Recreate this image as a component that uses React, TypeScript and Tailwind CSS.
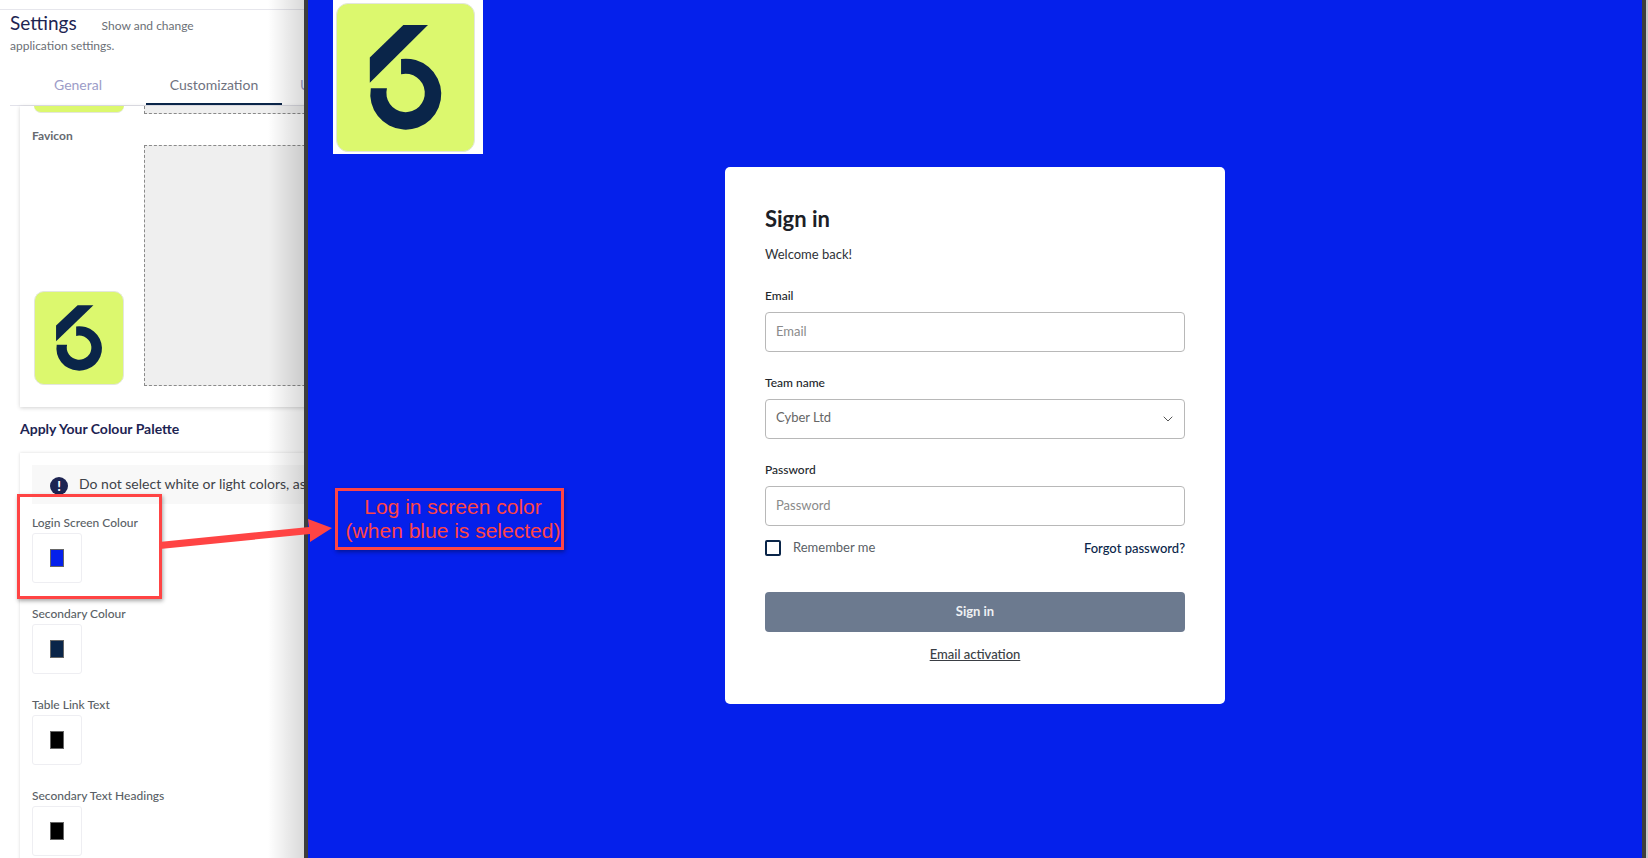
import { ChevronDown } from "lucide-react";

function Logo({ className }: { className: string }) {
  return (
    <div className={`border border-[#e3e6dc] bg-[#dcf86e] ${className}`}>
      <svg viewBox="0 0 139 149" preserveAspectRatio="none" className="h-full w-full">
        <path d="M67.3 21.3H92.3L33.3 79.7V54.3Z" fill="#0a2549" />
        <path
          d="M65 55.7A36 36 0 1 1 34.3 85.3H50.7A19.5 19.5 0 1 0 65 71.2Z"
          fill="#0a2549"
        />
      </svg>
    </div>
  );
}

const colours = [
  { label: "Login Screen Colour", value: "bg-[#0520eb]" },
  { label: "Secondary Colour", value: "bg-[#0a2549]" },
  { label: "Table Link Text", value: "bg-black" },
  { label: "Secondary Text Headings", value: "bg-black" },
];

function ColourField({ label, value }: { label: string; value: string }) {
  return (
    <div className="h-[91px] pt-[10px]">
      <p className="text-[12px] leading-[18px] font-medium text-[#5a5f66]">{label}</p>
      <div className="mt-[1px] flex h-[50px] w-[50px] items-center justify-center rounded-[3px] border border-[#eeeef2]">
        <div className={`h-[18px] w-[14px] border border-[#666] ${value}`} />
      </div>
    </div>
  );
}

function SettingsPanel() {
  return (
    <aside className="relative h-full w-[304px] shrink-0 overflow-hidden bg-white">
      <div className="mt-[9px] border-t border-[#e6e6ec]" />
      <div className="pl-[10px]">
        <div className="flex h-[26px] items-center">
          <h1 className="text-[19px] leading-[26px] text-[#1d2452]">Settings</h1>
          <span className="ml-[25px] pt-[5px] text-[12px] text-[#6b6f76]">Show and change</span>
        </div>
        <p className="mt-[2px] text-[12px] leading-[16px] text-[#6b6f76]">application settings.</p>
        <div className="mt-[18px] flex h-[34px] border-b border-[#e2e2ea] text-[14px]">
          <div className="flex w-[136px] shrink-0 justify-center pt-[2px] text-[#9c9cc8]">General</div>
          <div className="flex w-[136px] shrink-0 justify-center border-b-2 border-[#0a2549] pt-[2px] text-[#6f7280]">
            Customization
          </div>
          <div className="pl-[18px] pt-[2px] text-[#9c9cc8]">U</div>
        </div>
      </div>

      <section className="ml-[20px] h-[301px] w-[320px] bg-white shadow-[0_1px_4px_rgba(0,0,0,0.18)]">
        <div className="flex">
          <div className="ml-[14px] h-[7px] w-[90px] rounded-b-[9px] border-b border-[#e3e6dc] bg-[#dcf86e]" />
          <div className="ml-[20px] h-[8px] flex-1 border-x border-b border-dashed border-[#8a8a8a] bg-[#efefef]" />
        </div>
        <div className="flex pt-[31px]">
          <div className="flex h-[240px] w-[124px] flex-col justify-between pl-[12px]">
            <p className="-mt-[18px] text-[12px] leading-[18px] font-bold text-[#666a70]">Favicon</p>
            <Logo className="ml-[2px] h-[94px] w-[90px] rounded-[10px]" />
          </div>
          <div className="h-[241px] flex-1 border border-dashed border-[#8a8a8a] bg-[#efefef]" />
        </div>
      </section>

      <h2 className="ml-[20px] mt-[12px] text-[14px] leading-[20px] font-bold text-[#1d2452]">
        Apply Your Colour Palette
      </h2>

      <section className="ml-[20px] mt-[14px] w-[320px] bg-white px-[12px] pt-[12px] shadow-[0_0_3px_rgba(0,0,0,0.15)]">
        <div className="flex h-[39px] items-center whitespace-nowrap bg-[#f8f8f8] pl-[18px]">
          <div className="mt-[3px] flex h-[18px] w-[18px] shrink-0 items-center justify-center rounded-full bg-[#1d2452] text-[13px] leading-none font-black text-white">
            !
          </div>
          <span className="ml-[11px] -mt-[2px] text-[14px] text-[#3f4349]">
            Do not select white or light colors, as
          </span>
        </div>
        {colours.map((item) => (
          <ColourField key={item.label} label={item.label} value={item.value} />
        ))}
      </section>

      <div className="absolute inset-y-0 right-0 w-[36px] bg-gradient-to-r from-transparent to-black/15" />
    </aside>
  );
}

function Field({ label, children }: { label: string; children: React.ReactNode }) {
  return (
    <div>
      <p className="text-[12px] leading-[18px] font-medium text-[#22262b]">{label}</p>
      <div className="mt-[7px] flex h-[40px] items-center justify-between rounded-[4px] border border-[#b8b8b8] pl-[10px] pr-[8px] text-[13px] text-[#666]">
        {children}
      </div>
    </div>
  );
}

function LoginPreview() {
  return (
    <main className="h-full flex-1 bg-[#0520eb]">
      <div className="ml-[25px] h-[154px] w-[150px] bg-white pl-[3px] pt-[3px]">
        <Logo className="h-[149px] w-[139px] rounded-[12px]" />
      </div>
      <div className="ml-[417px] mt-[13px] h-[537px] w-[500px] rounded-[5px] bg-white px-[40px] pt-[37px]">
        <h2 className="text-[22px] leading-[30px] font-bold text-[#1c2026]">Sign in</h2>
        <p className="mt-[10px] text-[13px] leading-[20px] text-[#2e3238]">Welcome back!</p>
        <div className="mt-[23px] flex flex-col gap-[22px]">
          <Field label="Email">
            <span className="-mt-[1px] text-[#8a8a8a]">Email</span>
          </Field>
          <Field label="Team name">
            <span className="-mt-[3px]">Cyber Ltd</span>
            <ChevronDown size={16} strokeWidth={1.25} className="text-[#333]" />
          </Field>
          <Field label="Password">
            <span className="-mt-[1px] text-[#8a8a8a]">Password</span>
          </Field>
        </div>
        <div className="mt-[11px] flex items-center justify-between">
          <label className="flex items-center">
            <span className="h-[16px] w-[16px] rounded-[2px] border-2 border-[#0a2549]" />
            <span className="ml-[12px] -mt-[1px] text-[13px] text-[#5a5f66]">Remember me</span>
          </label>
          <a className="mt-[2px] text-[13px] font-medium text-[#0a2549]">Forgot password?</a>
        </div>
        <button className="mt-[33px] h-[40px] w-full rounded-[4px] bg-[#6c7a8f] text-[13px] font-bold text-[#eef0f3]">
          Sign in
        </button>
        <p className="mt-[13px] text-center text-[13px] font-medium text-[#3a3e44] underline">
          Email activation
        </p>
      </div>
    </main>
  );
}

export default function App() {
  return (
    <div className="relative flex h-[858px] w-[1648px] overflow-hidden bg-white font-['Lato','Noto_Sans',sans-serif]">
      <SettingsPanel />
      <div className="h-full w-[4px] shrink-0 bg-[#3d3d3d]" />
      <LoginPreview />
      <div className="h-full w-[4px] shrink-0 bg-[#3d3d3d]" />
      <div className="h-full w-[2px] shrink-0 bg-[#c8c8c8]" />

      {/* annotation drawn on top of the screenshot */}
      <div className="absolute left-[17px] top-[494px] h-[105px] w-[145px] border-[3px] border-[#ff4444] shadow-[1px_2px_4px_rgba(0,0,0,0.35)]" />
      <svg className="absolute left-[155px] top-[510px] h-[50px] w-[185px]" viewBox="0 0 185 50">
        <path d="M4 32L154 17L153 9L177 18L155 32L155 24L5 39Z" fill="#ff4444" />
      </svg>
      <div className="absolute left-[335px] top-[488px] flex h-[62px] w-[229px] flex-col items-center justify-center border-[3px] border-[#ff4444] pl-[7px] font-['Liberation_Sans',sans-serif] text-[21px] leading-[24px] text-[#ff4444] shadow-[1px_2px_4px_rgba(0,0,0,0.35)]">
        <span>Log in screen color</span>
        <span className="whitespace-nowrap">(when blue is selected)</span>
      </div>
    </div>
  );
}
